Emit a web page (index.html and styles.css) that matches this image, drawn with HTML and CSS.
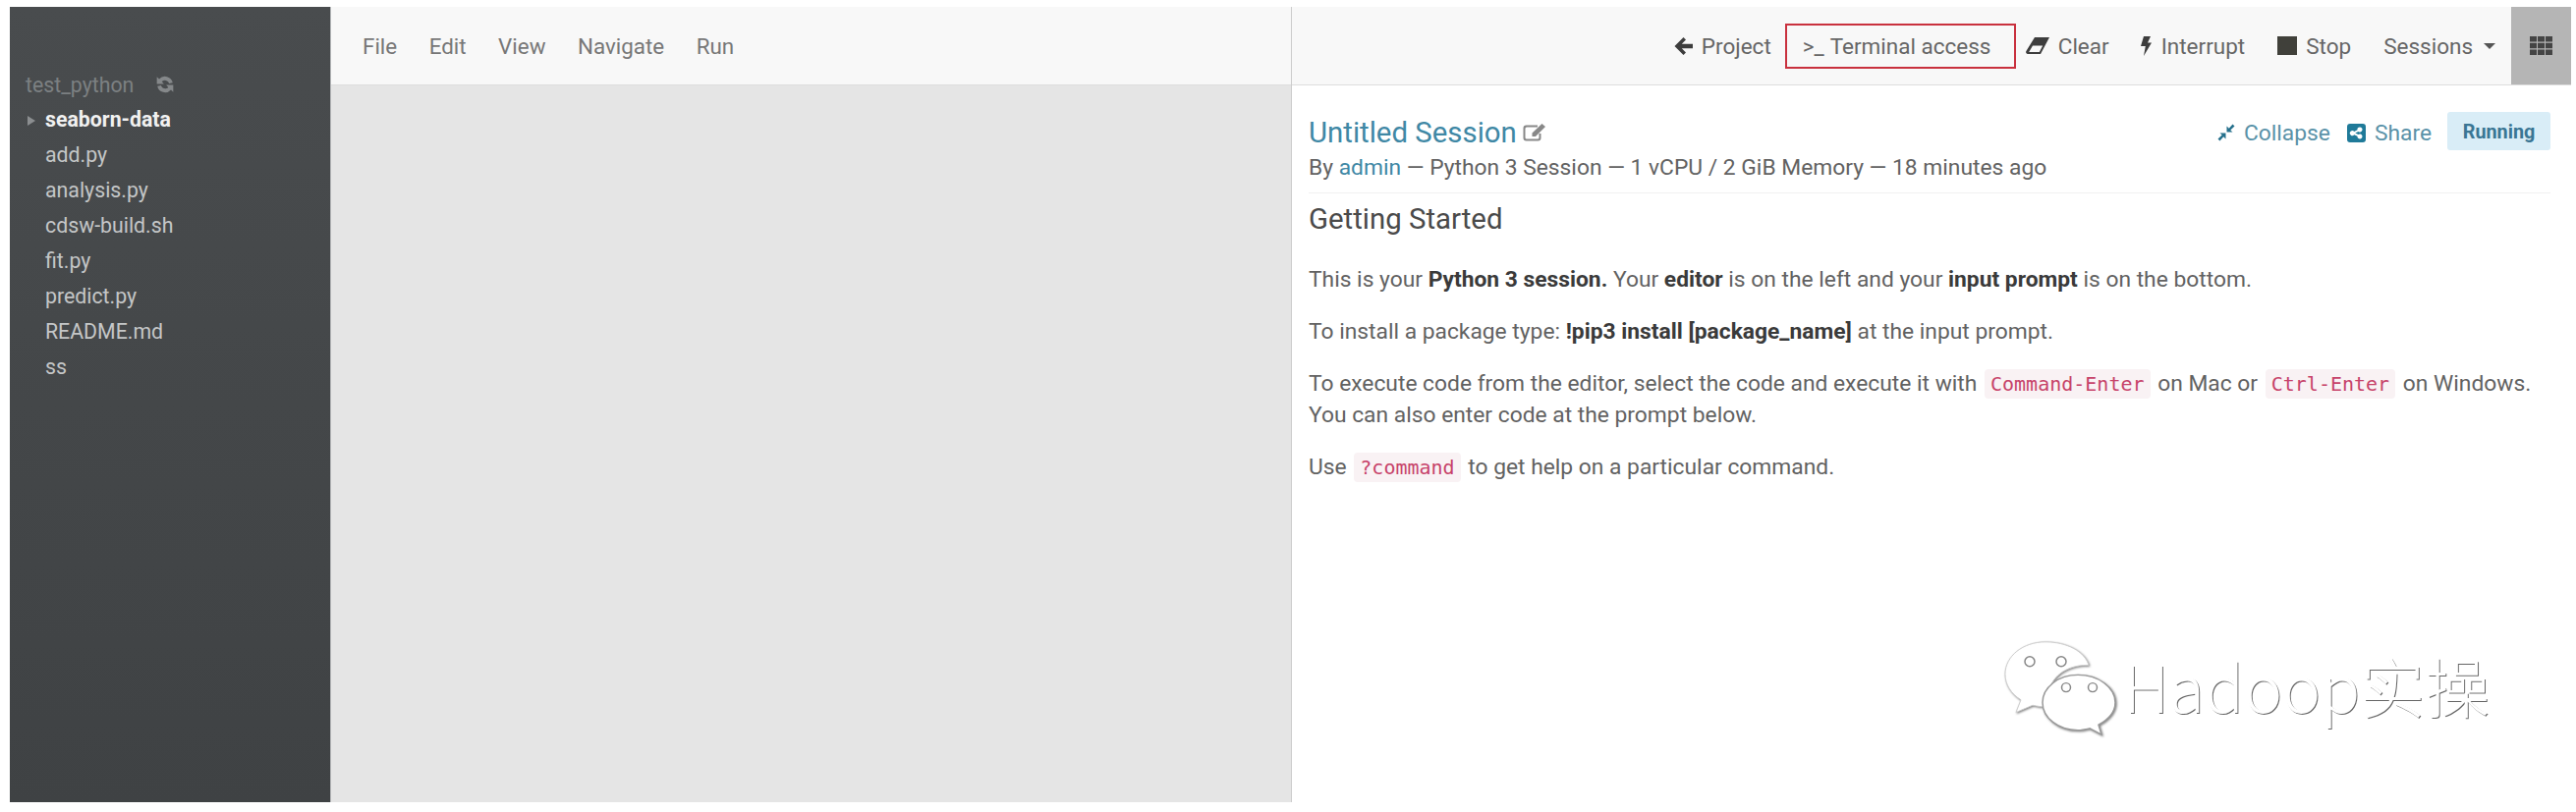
FILE: index.html
```html
<!DOCTYPE html>
<html lang="en">
<head>
  <meta charset="UTF-8">
  <meta name="viewport" content="width=device-width, initial-scale=1.0">
  <title>Untitled Session</title>
  <link rel="stylesheet" href="styles.css">
</head>
<body>
  <div class="workbench">
    <aside class="sidebar">
      <div class="project-name">test_python
        <svg class="refresh" viewBox="0 0 18 18"><path d="M16 7.500A7.200 7.200 0 0 0 3.600 4L1.500 2v6.500H8L6 6.400A4 4 0 0 1 12.700 8zM2 10.500A7.200 7.200 0 0 0 14.400 14l2.100 2V9.500H10l2 2.100A4 4 0 0 1 5.300 10z"/></svg>
      </div>
      <ul class="file-list">
        <li class="folder">seaborn-data</li>
        <li>add.py</li>
        <li>analysis.py</li>
        <li>cdsw-build.sh</li>
        <li>fit.py</li>
        <li>predict.py</li>
        <li>README.md</li>
        <li>ss</li>
      </ul>
    </aside>

    <section class="editor">
      <nav class="menu">
        <span>File</span>
        <span>Edit</span>
        <span>View</span>
        <span>Navigate</span>
        <span>Run</span>
      </nav>
    </section>

    <section class="session">
      <nav class="toolbar">
        <span class="tool tool-project">
          <svg class="icon icon-arrow" viewBox="0 0 19 18"><path d="M9.500 0l2.500 2.500L7.800 6.700H19v4.600H7.800l4.200 4.200L9.500 18 .5 9z"/></svg>Project
        </span>
        <span class="tool tool-terminal"><span class="prompt">&gt;_</span>Terminal access</span>
        <span class="tool tool-clear">
          <svg class="icon icon-eraser" viewBox="0 0 24 17"><path fill-rule="evenodd" d="M9 0h15L15 17H2a2 2 0 0 1-1.600-3zM7 8.500L3.200 15h10.600l3.400-6.500z"/></svg>Clear
        </span>
        <span class="tool tool-interrupt">
          <svg class="icon icon-bolt" viewBox="0 0 11 20"><path d="M3 0h7L7 6.500h4L3 20l1.800-10H0z"/></svg>Interrupt
        </span>
        <span class="tool tool-stop"><i class="stop-square"></i>Stop</span>
        <span class="tool tool-sessions">Sessions<i class="caret"></i></span>
        <span class="grid-button">
          <svg viewBox="0 0 23 19"><path d="M0 0h7v5.500H0zM8 0h7v5.500H8zM16 0h7v5.500h-7zM0 6.700h7v5.600H0zM8 6.700h7v5.600H8zM16 6.700h7v5.600h-7zM0 13.500h7V19H0zM8 13.500h7V19H8zM16 13.500h7V19h-7z"/></svg>
        </span>
      </nav>

      <div class="session-body">
        <header class="session-head">
          <div>
            <h2 class="session-title">Untitled Session
              <svg class="edit" viewBox="0 0 23 18"><path d="M3.500 1.500H15v2H4a1.500 1.500 0 0 0-1.500 1.500v9A1.500 1.500 0 0 0 4 15.500h11a1.500 1.500 0 0 0 1.500-1.500v-4h2v4.500a3 3 0 0 1-3 3H3.500a3 3 0 0 1-3-3v-10a3 3 0 0 1 3-3z"/><path d="M19.500 0L23 3 13 13H9.500v-3.500z"/></svg>
            </h2>
            <div class="session-meta">By <a>admin</a> — Python 3 Session — 1 vCPU / 2 GiB Memory — 18 minutes ago</div>
          </div>
          <div class="session-actions">
            <a class="action">
              <svg class="icon icon-collapse" viewBox="0 0 18 18"><path d="M9.500 8.500V2.500l2.300 2.300L15.500.5l2 2-4.200 4 2.200 2zM8.500 9.500v6l-2.300-2.300-3.700 4.300-2-2 4.200-4-2.200-2z"/></svg>Collapse
            </a>
            <a class="action action-share">
              <svg class="icon icon-share" viewBox="0 0 19 19"><path fill-rule="evenodd" d="M3 0h13a3 3 0 0 1 3 3v13a3 3 0 0 1-3 3H3a3 3 0 0 1-3-3V3a3 3 0 0 1 3-3zM13 3.500a2.500 2.500 0 0 0-2.500 2.800L7.300 8a2.500 2.500 0 1 0 0 3.200l3.200 1.600a2.500 2.500 0 1 0 .9-1.700L8.300 9.600l3.100-1.700A2.500 2.500 0 1 0 13 3.500z"/></svg>Share
            </a>
            <span class="badge">Running</span>
          </div>
        </header>

        <h3 class="intro-title">Getting Started</h3>
        <p>This is your <b>Python 3 session.</b> Your <b>editor</b> is on the left and your <b>input prompt</b> is on the bottom.</p>
        <p>To install a package type: <b>!pip3 install [package_name]</b> at the input prompt.</p>
        <p>To execute code from the editor, select the code and execute it with <code>Command-Enter</code> on Mac or <code>Ctrl-Enter</code> on Windows.<br>You can also enter code at the prompt below.</p>
        <p>Use <code>?command</code> to get help on a particular command.</p>
      </div>
    </section>
  </div>

  <div class="watermark">
    <svg class="wechat" viewBox="0 0 115 108" preserveAspectRatio="none">
      <path class="bubble" d="M42 2C19 2 1 18 1 38c0 12 6 22 16 29l-5 14 17-8c5 1 9 2 14 2 2 0 4 0 6-1-2-5-3-9-3-14 0-18 17-32 38-32h2C82 13 64 2 42 2z"/>
      <path class="bubble bubble-front" d="M75 39c-20 0-36 14-36 31s16 31 36 31c4 0 8-1 12-2l12 7-3-11c10-6 17-15 17-25 0-17-17-31-38-31z"/>
      <ellipse class="eye" cx="26" cy="24" rx="5" ry="5.500"/>
      <ellipse class="eye" cx="58" cy="24" rx="5" ry="5.500"/>
      <ellipse class="eye" cx="63" cy="53" rx="4.500" ry="5"/>
      <ellipse class="eye" cx="90" cy="53" rx="4.500" ry="5"/>
    </svg>
    <span class="watermark-text">Hadoop实操</span>
  </div>
</body>
</html>
```

FILE: styles.css
```css
* {
  box-sizing: border-box;
}

html, body {
  height: 100%;
}

body {
  margin: 0;
  padding: 7px 5px 10px 10px;
  background-color: #fff;
  font-family: Roboto, "Noto Sans CJK SC", sans-serif;
  font-size: 22.8px;
  color: #626262;
  overflow: hidden;
}

a {
  color: #3f88a5;
}

.workbench {
  display: flex;
  height: 100%;
}

/* file tree */
.sidebar {
  width: 327px;
  flex-shrink: 0;
  padding-top: 61px;
  font-size: 21.3px;
  background: linear-gradient(#494c4e, #3f4244);
  border-right: 1px solid #b4b6b8;
  color: #c4c6c7;
}

.project-name {
  display: flex;
  align-items: center;
  height: 36px;
  padding-left: 16px;
  color: #7c8082;
}

.refresh {
  width: 20px;
  height: 20px;
  margin-left: 22px;
  fill: #85888a;
}

.file-list {
  list-style: none;
  margin: 0;
  padding: 0 0 0 36px;
}

.file-list li {
  height: 36px;
  line-height: 36px;
}

.file-list .folder {
  position: relative;
  font-weight: 700;
  color: #f1f1f1;
}

.file-list .folder::before {
  content: "";
  position: absolute;
  left: -18px;
  top: 14px;
  border-left: 8px solid #8b8e90;
  border-top: 5px solid transparent;
  border-bottom: 5px solid transparent;
}

/* editor */
.editor {
  width: 978px;
  flex-shrink: 0;
  background-color: #e5e5e5;
  border-right: 1px solid #ccc;
}

.menu {
  display: flex;
  gap: 32.5px;
  align-items: center;
  height: 80px;
  padding-left: 32px;
  font-size: 22.4px;
  background-color: #f8f8f8;
  border-bottom: 1px solid #ddd;
  color: #777;
}

/* session pane */
.session {
  flex: 1;
  min-width: 0;
}

.toolbar {
  display: flex;
  align-items: center;
  justify-content: flex-end;
  height: 80px;
  font-size: 22.5px;
  background-color: #f8f8f8;
  border-bottom: 1px solid #ddd;
  color: #666;
}

.tool {
  display: flex;
  align-items: center;
}

.icon {
  width: 19px;
  height: 18px;
  margin-right: 9px;
  fill: #3d3d3d;
}

.tool-project {
  margin-right: 14px;
}

.tool-terminal {
  width: 235px;
  height: 46px;
  margin-right: 10px;
  padding-left: 16px;
  border: 2px solid #c9313e;
}

.prompt {
  margin-right: 6px;
}

.icon-eraser {
  width: 24px;
  height: 17px;
}

.tool-clear {
  margin-right: 32px;
}

.icon-bolt {
  width: 11px;
  height: 20px;
  margin-right: 10px;
}

.tool-interrupt {
  margin-right: 33px;
}

.stop-square {
  width: 20px;
  height: 19px;
  margin-right: 9px;
  background-color: #40403a;
}

.tool-stop {
  margin-right: 33px;
}

.caret {
  margin-left: 11px;
  border-top: 6px solid #555;
  border-left: 6px solid transparent;
  border-right: 6px solid transparent;
}

.tool-sessions {
  margin-right: 16px;
}

.grid-button {
  display: flex;
  align-items: center;
  justify-content: center;
  width: 61px;
  height: 79px;
  background-color: #b5b5b5;
}

.grid-button svg {
  width: 23px;
  height: 19px;
  fill: #444;
}

.session-body {
  padding: 0 21px 0 17px;
}

.session-head {
  display: flex;
  justify-content: space-between;
  height: 110px;
  padding-top: 30px;
  border-bottom: 1px solid #f1f1f1;
}

.session-title {
  display: flex;
  align-items: center;
  margin: 0;
  height: 36px;
  font-size: 29.4px;
  font-weight: 400;
  color: #3f88a5;
}

.edit {
  width: 23px;
  height: 18px;
  margin-left: 6px;
  fill: #888;
}

.session-meta {
  margin-top: 3px;
  line-height: 30px;
}

.session-actions {
  display: flex;
  align-items: flex-start;
}

.action {
  display: flex;
  align-items: center;
  height: 36px;
  margin-right: 17px;
  color: #5a92a8;
}

.action-share {
  margin-right: 16px;
}

.icon-collapse {
  width: 18px;
  fill: #26708c;
}

.icon-share {
  height: 19px;
  fill: #1f7a99;
}

.badge {
  width: 105px;
  height: 39px;
  margin-top: -3px;
  line-height: 41px;
  text-align: center;
  font-size: 19.8px;
  font-weight: 700;
  color: #3a7694;
  background-color: #d9edf7;
  border-radius: 3px;
}

.intro-title {
  margin: 0 0 28px;
  padding-top: 8px;
  height: 44px;
  font-size: 29.4px;
  line-height: 36px;
  font-weight: 400;
  color: #4a4a4a;
}

.session-body p {
  margin: 0 0 21px;
  line-height: 32px;
}

.session-body b {
  font-weight: 700;
  color: #3a3a3a;
}

code {
  padding: 3px 6px;
  margin: 0 2px;
  font-family: "DejaVu Sans Mono", monospace;
  font-size: 20px;
  color: #c7436a;
  background-color: #f9f2f4;
  border-radius: 4px;
}

/* embossed mark in the corner */
.watermark {
  position: absolute;
  left: 2040px;
  top: 652px;
  display: flex;
  align-items: flex-start;
  gap: 6px;
}

.wechat {
  width: 115px;
  height: 98px;
  filter: drop-shadow(1px 1px 1px rgba(0, 0, 0, 0.5));
}

.bubble {
  fill: #fff;
  stroke: #ccc;
  stroke-width: 1;
}

.bubble-front {
  stroke: #999;
  stroke-width: 1.500;
}

.eye {
  fill: #fff;
  stroke: #888;
  stroke-width: 1.500;
}

.watermark-text {
  font-family: "Noto Sans CJK SC", sans-serif;
  font-weight: 300;
  font-size: 66px;
  line-height: 90px;
  color: #fff;
  text-shadow: 1px 1px 0 rgba(0, 0, 0, 0.6);
}
```
